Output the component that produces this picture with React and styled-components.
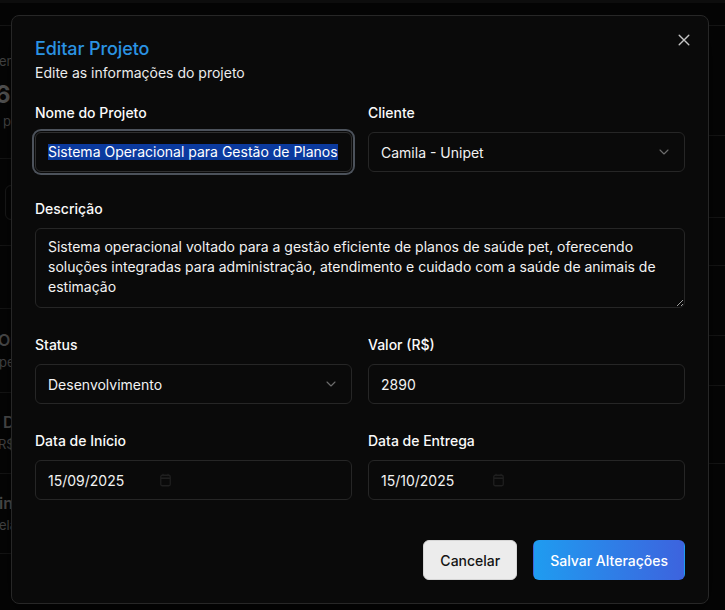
import React from 'react';
import styled, { createGlobalStyle } from 'styled-components';

const GlobalStyle = createGlobalStyle`
  html, body { margin: 0; padding: 0; background: #050505; }
  body { font-family: Inter, "Noto Sans", sans-serif; color: #f5f5f5; overflow: hidden; color-scheme: dark; }
  * { box-sizing: border-box; }
`;

/* ---------- dimmed page behind the dialog ---------- */
const Page = styled.div`
  position: relative;
  width: 725px;
  height: 610px;
  overflow: hidden;
  background: #050505;
`;
const TopBand = styled.div`
  height: 3px;
  background: #0e0e0e;
  margin-bottom: 22px;
`;
const BgGrid = styled.div`
  display: grid;
  grid-template-columns: 360px 1fr;
`;
const BgColumn = styled.div`
  display: flex;
  flex-direction: column;
`;
const BgRow = styled.div`
  height: ${p => p.$h}px;
  border-top: 1px solid #161616;
  display: flex;
  flex-direction: column;
  justify-content: ${p => (p.$center ? 'center' : 'flex-start')};
  padding-top: ${p => p.$pt || 0}px;
  gap: ${p => p.$gap || 0}px;
`;
const BgText = styled.span`
  display: block;
  margin-left: ${p => p.$x}px;
  margin-top: ${p => p.$mt || 0}px;
  font-size: ${p => p.$size || 13}px;
  font-weight: ${p => p.$w || 400};
  line-height: ${p => p.$lh || 18}px;
  color: ${p => p.$c || '#4a4a4a'};
  white-space: nowrap;
`;
const BgBox = styled.div`
  margin-left: 5px;
  width: 120px;
  height: 35px;
  border: 1px solid #1c1c1c;
  border-radius: 6px;
`;

/* ---------- dialog ---------- */
const Dialog = styled.div`
  position: absolute;
  left: 11px;
  top: 15px;
  width: 698px;
  background: #0a0a0a;
  border: 1px solid #272727;
  border-radius: 8px;
  padding: 23px;
  box-shadow: 0 10px 30px rgba(0, 0, 0, 0.5);
`;
const CloseButton = styled.button`
  position: absolute;
  top: 16px;
  right: 16px;
  width: 16px;
  height: 16px;
  padding: 0;
  border: 0;
  background: transparent;
  display: flex;
  align-items: center;
  justify-content: center;
  cursor: pointer;
`;
const Header = styled.div`
  display: flex;
  flex-direction: column;
  gap: 6px;
  margin-bottom: 20px;
`;
const Title = styled.h2`
  margin: 0;
  padding-top: 1px;
  font-size: 18px;
  line-height: 18px;
  font-weight: 500;
  color: #2b93e3;
  letter-spacing: -0.1px;
`;
const Subtitle = styled.p`
  margin: 0;
  margin-top: -1px;
  font-size: 14px;
  line-height: 20px;
  color: #ececec;
`;
const Form = styled.div`
  display: flex;
  flex-direction: column;
  gap: 27px;
`;
const Row = styled.div`
  display: grid;
  grid-template-columns: ${p => (p.$single ? '1fr' : '1fr 1fr')};
  column-gap: 16px;
`;
const Field = styled.div`
  display: flex;
  flex-direction: column;
  gap: 9px;
`;
const Label = styled.label`
  font-size: 14px;
  line-height: 20px;
  font-weight: 500;
  color: #fafafa;
`;
const Control = styled.div`
  height: 40px;
  border: 1px solid ${p => (p.$focused ? '#2f2f2f' : '#262626')};
  border-radius: 6px;
  padding: 0 12px;
  display: flex;
  align-items: center;
  justify-content: ${p => (p.$between ? 'space-between' : 'flex-start')};
  font-size: 14px;
  color: #f2f2f2;
  background: #0a0a0a;
  box-shadow: ${p => (p.$focused ? '0 0 0 1px #0a0a0a, 0 0 0 3px #4c525b' : 'none')};
`;
const Selected = styled.span`
  background: #0b3a9e;
  color: #ffffff;
  line-height: 16px;
`;
const DateText = styled.span`
  width: 112px;
`;
const TextArea = styled.textarea`
  height: 80px;
  width: 100%;
  border: 1px solid #262626;
  border-radius: 6px;
  padding: 8px 12px;
  font-family: Inter, "Noto Sans", sans-serif;
  font-size: 14px;
  line-height: 20px;
  color: #f2f2f2;
  background: #0a0a0a;
  resize: vertical;
  overflow: hidden;
  outline: none;
`;
const Footer = styled.div`
  display: flex;
  justify-content: flex-end;
  gap: 16px;
  margin-top: 40px;
`;
const Button = styled.button`
  height: 40px;
  padding: 0 16px;
  border-radius: 6px;
  font-family: Inter, "Noto Sans", sans-serif;
  font-size: 14px;
  font-weight: 500;
  cursor: pointer;
  border: 1px solid ${p => (p.$primary ? 'transparent' : '#d6d6d6')};
  background: ${p => (p.$primary ? 'linear-gradient(90deg, #1f9cf0 0%, #3d63de 100%)' : '#ececec')};
  color: ${p => (p.$primary ? '#ffffff' : '#141414')};
`;

const XIcon = () => (
  <svg width="16" height="16" viewBox="0 0 16 16" fill="none">
    <path d="M3.2 3.2 12.8 12.8 M12.8 3.2 3.2 12.8" stroke="#c4c4c4" strokeWidth="1.4" strokeLinecap="round" />
  </svg>
);

const Chevron = () => (
  <svg width="16" height="16" viewBox="0 0 24 24" fill="none" style={{ opacity: 0.5 }}>
    <path d="m6 9 6 6 6-6" stroke="#d0d0d0" strokeWidth="1.6" strokeLinecap="round" strokeLinejoin="round" />
  </svg>
);

const CalendarIcon = () => (
  <svg width="11" height="14" viewBox="0 0 11 14" fill="none">
    <rect x="0.75" y="2.25" width="9.5" height="10.5" rx="1.5" stroke="#1f1f1f" strokeWidth="1.3" />
    <path d="M1 5.2h9" stroke="#1f1f1f" strokeWidth="1.6" />
    <path d="M3 0.8v2.4 M8 0.8v2.4" stroke="#1f1f1f" strokeWidth="1.2" />
  </svg>
);

export default function App() {
  return (
    <>
      <GlobalStyle />
      <Page>
        <TopBand />
        <BgGrid>
          <BgColumn>
            <BgRow $h={133} $pt={26}>
              <BgText $x={-1} $size={13}>entregues</BgText>
              <BgText $x={-5} $mt={10} $size={24} $w={700} $lh={30} $c="#5a5a5a">6</BgText>
              <BgText $x={3} $mt={2} $size={13}>projetos</BgText>
            </BgRow>
            <BgRow $h={87} $pt={26}>
              <BgBox />
            </BgRow>
            <BgRow $h={63} />
            <BgRow $h={84} $center $gap={4}>
              <BgText $x={-2} $size={16} $w={600} $c="#505050">Orçamento</BgText>
              <BgText $x={-1}>pendente</BgText>
            </BgRow>
            <BgRow $h={81} $center $gap={4}>
              <BgText $x={3} $size={16} $w={600} $c="#505050">Dashboard</BgText>
              <BgText $x={-2}>R$ 1.500</BgText>
            </BgRow>
            <BgRow $h={80} $center $gap={4}>
              <BgText $x={-1} $size={16} $w={600} $c="#505050">integração</BgText>
              <BgText $x={-1}>elaborado</BgText>
            </BgRow>
            <BgRow $h={60} />
          </BgColumn>
          <BgColumn>
            <BgRow $h={110} />
            <BgRow $h={82} />
            <BgRow $h={48} />
            <BgRow $h={70} />
            <BgRow $h={50} />
            <BgRow $h={78} />
            <BgRow $h={150} />
          </BgColumn>
        </BgGrid>

        <Dialog role="dialog">
          <CloseButton aria-label="Fechar">
            <XIcon />
          </CloseButton>
          <Header>
            <Title>Editar Projeto</Title>
            <Subtitle>Edite as informações do projeto</Subtitle>
          </Header>
          <Form>
            <Row>
              <Field>
                <Label>Nome do Projeto</Label>
                <Control $focused>
                  <Selected>Sistema Operacional para Gestão de Planos</Selected>
                </Control>
              </Field>
              <Field>
                <Label>Cliente</Label>
                <Control $between>
                  <span>Camila - Unipet</span>
                  <Chevron />
                </Control>
              </Field>
            </Row>
            <Row $single>
              <Field>
                <Label>Descrição</Label>
                <TextArea
                  readOnly
                  value="Sistema operacional voltado para a gestão eficiente de planos de saúde pet, oferecendo soluções integradas para administração, atendimento e cuidado com a saúde de animais de estimação"
                />
              </Field>
            </Row>
            <Row>
              <Field>
                <Label>Status</Label>
                <Control $between>
                  <span>Desenvolvimento</span>
                  <Chevron />
                </Control>
              </Field>
              <Field>
                <Label>Valor (R$)</Label>
                <Control>
                  <span>2890</span>
                </Control>
              </Field>
            </Row>
            <Row>
              <Field>
                <Label>Data de Início</Label>
                <Control>
                  <DateText>15/09/2025</DateText>
                  <CalendarIcon />
                </Control>
              </Field>
              <Field>
                <Label>Data de Entrega</Label>
                <Control>
                  <DateText>15/10/2025</DateText>
                  <CalendarIcon />
                </Control>
              </Field>
            </Row>
          </Form>
          <Footer>
            <Button>Cancelar</Button>
            <Button $primary>Salvar Alterações</Button>
          </Footer>
        </Dialog>
      </Page>
    </>
  );
}
